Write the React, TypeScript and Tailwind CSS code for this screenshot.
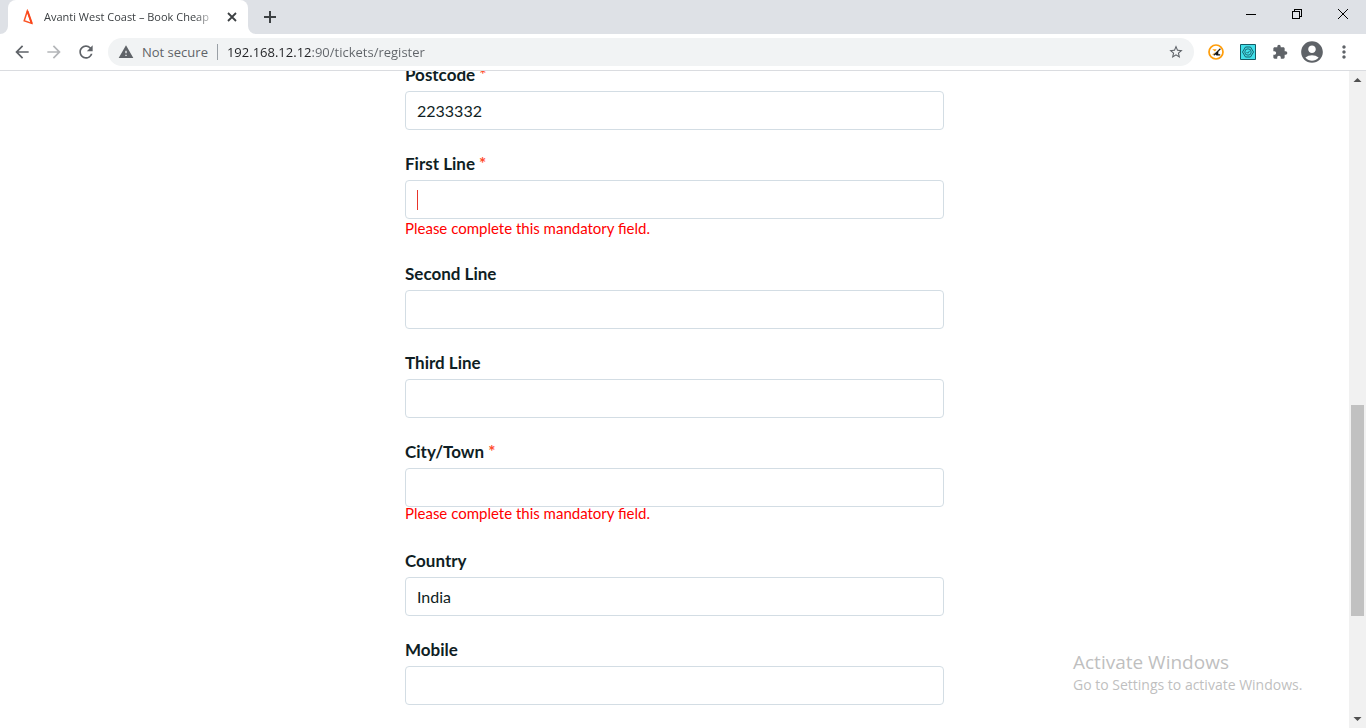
import React from "react";
import {
  MdAccountCircle,
  MdArrowBack,
  MdArrowForward,
  MdExtension,
  MdMoreVert,
  MdRefresh,
  MdStarBorder,
  MdWarning,
} from "react-icons/md";

type FieldProps = {
  id: string;
  label: string;
  value?: string;
  required?: boolean;
  error?: string;
  tightError?: boolean;
  caret?: boolean;
};

function Field({ id, label, value = "", required, error, tightError, caret }: FieldProps) {
  return (
    <div className="pb-[22px]">
      <label htmlFor={id} className="mb-1 block text-[17px] leading-6 font-bold text-[#0f1e24]">
        {label}
        {required && <span className="text-[#ff4b2b]"> *</span>}
      </label>
      <div className="relative">
        <input
          id={id}
          type="text"
          defaultValue={value}
          aria-invalid={error ? true : undefined}
          className="block h-[39px] w-full rounded border border-[#d3dde4] bg-white px-[11px] text-base text-[#0f1e24] outline-none"
        />
        {caret && <span aria-hidden="true" className="absolute top-2.5 left-3 h-5 w-px bg-[#e8352b]" />}
      </div>
      {error && (
        <p className={tightError ? "relative pb-2 text-[15px] leading-3 text-[#f00]" : "pb-0.5 text-[15px] leading-[19px] text-[#f00]"}>
          {error}
        </p>
      )}
    </div>
  );
}

function TabStrip() {
  return (
    <div className="flex h-[34px] shrink-0 items-stretch bg-[#dee1e6] pl-2">
      <div className="relative flex w-60 items-center rounded-t-lg bg-white pr-2 pl-3">
        <svg aria-hidden="true" viewBox="0 0 16 16" className="mr-2 size-4 shrink-0" fill="none">
          <path d="M7.300 2 4.200 11.800 11.600 14.400z" stroke="#fb5425" strokeWidth="1.500" strokeLinejoin="miter" />
          <path d="M7.500 2 12 14.800" stroke="#f9461c" strokeWidth="1.900" />
        </svg>
        <span className="min-w-0 flex-1 overflow-hidden text-[11px] whitespace-nowrap text-[#3c4043] [mask-image:linear-gradient(to_right,black_88%,transparent)]">
          Avanti West Coast – Book Cheap
        </span>
        <button type="button" aria-label="Close tab" className="ml-2 flex size-4 shrink-0 items-center justify-center">
          <svg viewBox="0 0 16 16" className="size-4" stroke="#3c4043" strokeWidth="1.8">
            <path d="M4 4 12 12M12 4 4 12" />
          </svg>
        </button>
        <svg aria-hidden="true" viewBox="0 0 8 8" className="absolute bottom-0 -left-2 size-2" fill="#fff">
          <path d="M8 0v8H0a8 8 0 0 0 8-8" />
        </svg>
        <svg aria-hidden="true" viewBox="0 0 8 8" className="absolute -right-2 bottom-0 size-2" fill="#fff">
          <path d="M0 0v8h8a8 8 0 0 1-8-8" />
        </svg>
      </div>
      <button type="button" aria-label="New tab" className="ml-3 flex w-5 items-center justify-center">
        <svg viewBox="0 0 20 20" className="size-5" stroke="#3c4043" strokeWidth="2">
          <path d="M10 4v12M4 10h12" />
        </svg>
      </button>
      <div className="ml-auto flex h-7 text-black">
        <button type="button" aria-label="Minimize" className="flex w-[46px] items-center justify-center">
          <svg viewBox="0 0 10 10" className="size-2.5" stroke="currentColor" shapeRendering="crispEdges">
            <path d="M0 5.5h10" />
          </svg>
        </button>
        <button type="button" aria-label="Restore" className="flex w-[46px] items-center justify-center">
          <svg viewBox="0 0 10 10" className="size-2.5" stroke="currentColor" fill="none" shapeRendering="crispEdges">
            <path d="M.5 2.5h7v7h-7zM2.5 2.5v-2h7v7h-2" />
          </svg>
        </button>
        <button type="button" aria-label="Close" className="flex w-[46px] items-center justify-center">
          <svg viewBox="0 0 10 10" className="size-2.5" stroke="currentColor">
            <path d="M0 0 10 10M10 0 0 10" />
          </svg>
        </button>
      </div>
    </div>
  );
}

function Toolbar() {
  return (
    <div className="flex h-[37px] shrink-0 items-center border-b border-[#dadce0] bg-white pr-3 pl-3 text-[#5f6368]">
      <div className="flex gap-3">
        <button type="button" aria-label="Back">
          <MdArrowBack className="size-5" />
        </button>
        <button type="button" aria-label="Forward" disabled className="text-[#b4b6b9]">
          <MdArrowForward className="size-5" />
        </button>
        <button type="button" aria-label="Reload">
          <MdRefresh className="size-5" />
        </button>
      </div>
      <div className="ml-3 flex h-7 min-w-0 flex-1 items-center rounded-full bg-[#f1f3f4] pr-2.5 pl-2.5">
        <MdWarning aria-hidden="true" className="size-4 shrink-0" />
        <span className="ml-2 shrink-0 text-[13px] leading-5 whitespace-nowrap">Not secure</span>
        <span className="ml-[9px] h-4 w-px shrink-0 bg-[#9aa0a6]" />
        <input
          type="text"
          aria-label="Address"
          defaultValue="192.168.12.12:90/tickets/register"
          className="ml-[9px] min-w-0 flex-1 bg-[linear-gradient(to_right,#202124_84px,#5f6368_84px)] bg-clip-text text-[13px] leading-5 text-transparent outline-none"
        />
        <button type="button" aria-label="Bookmark this page">
          <MdStarBorder className="size-4" />
        </button>
      </div>
      <div className="ml-3.5 flex shrink-0 items-center">
        <button type="button" aria-label="Performance extension">
          <svg viewBox="0 0 16 16" className="size-4" fill="none">
            <circle cx="8" cy="8" r="7" fill="#fff" stroke="#ff9d0a" strokeWidth="1.7" />
            <path d="M4.2 5.2h4.4L7 7.600z" fill="#ff9d0a" />
            <path d="M7 8.200 3.800 10.800h2.400z" fill="#ffb647" />
            <path d="M12.400 4.800 5.800 11.200" stroke="#222" strokeWidth="1.200" />
            <path d="m9 8.200 1.300-1v3.100h1.900v1.200H8.700L7.200 10.600z" fill="#111" />
          </svg>
        </button>
        <button type="button" aria-label="Page check extension" className="ml-4">
          <svg viewBox="0 0 16 16" className="size-4" fill="none" stroke="#17606b">
            <path d="M.5.5h15v15H.5z" fill="#42e0ea" stroke="#155c66" />
            <path d="M5.500 3h5L13.500 8l-3 5h-5l-3-5z" strokeWidth="1" />
            <circle cx="8" cy="8" r="3.200" strokeWidth=".9" />
            <path d="m6.500 8 1.200 1.200 2-2.400" strokeWidth=".9" />
          </svg>
        </button>
        <button type="button" aria-label="Extensions" className="ml-4">
          <MdExtension className="size-4" />
        </button>
        <button type="button" aria-label="Profile" className="ml-[11px]">
          <MdAccountCircle className="size-[26px]" />
        </button>
        <button type="button" aria-label="Menu" className="ml-[9px]">
          <MdMoreVert className="size-5" />
        </button>
      </div>
    </div>
  );
}

function ScrollTrack() {
  return (
    <div aria-hidden="true" className="flex w-[17px] shrink-0 flex-col items-center bg-[#f1f1f1] text-[#505050]">
      <svg viewBox="0 0 17 17" className="size-[17px] shrink-0" fill="currentColor">
        <path d="M4.500 11h8L8.500 7z" />
      </svg>
      <div className="grow-[317]" />
      <div className="w-[13px] grow-[211] bg-[#c1c1c1]" />
      <div className="grow-[95]" />
      <svg viewBox="0 0 17 17" className="size-[17px] shrink-0" fill="currentColor">
        <path d="M4.500 6h8l-4 4z" />
      </svg>
    </div>
  );
}

export default function App() {
  const mandatory = "Please complete this mandatory field.";
  return (
    <div className="flex h-screen flex-col overflow-hidden bg-white font-['Open_Sans',sans-serif]">
      <TabStrip />
      <Toolbar />
      <div className="relative flex min-h-0 flex-1">
        <main className="min-w-0 flex-1 overflow-hidden">
          <form className="mx-auto -mt-2 w-full max-w-[539px] font-[Lato,sans-serif]">
            <Field id="postcode" label="Postcode" value="2233332" required />
            <Field id="line1" label="First Line" required caret error={mandatory} />
            <Field id="line2" label="Second Line" />
            <Field id="line3" label="Third Line" />
            <Field id="city" label="City/Town" required tightError error={mandatory} />
            <Field id="country" label="Country" value="India" />
            <Field id="mobile" label="Mobile" />
          </form>
        </main>
        <ScrollTrack />
        <div className="pointer-events-none absolute right-[57px] bottom-8 w-[236px] whitespace-nowrap text-[#bfbfbf]">
          <p className="text-[19px] leading-6">Activate Windows</p>
          <p className="text-sm leading-[22px]">Go to Settings to activate Windows.</p>
        </div>
      </div>
    </div>
  );
}
